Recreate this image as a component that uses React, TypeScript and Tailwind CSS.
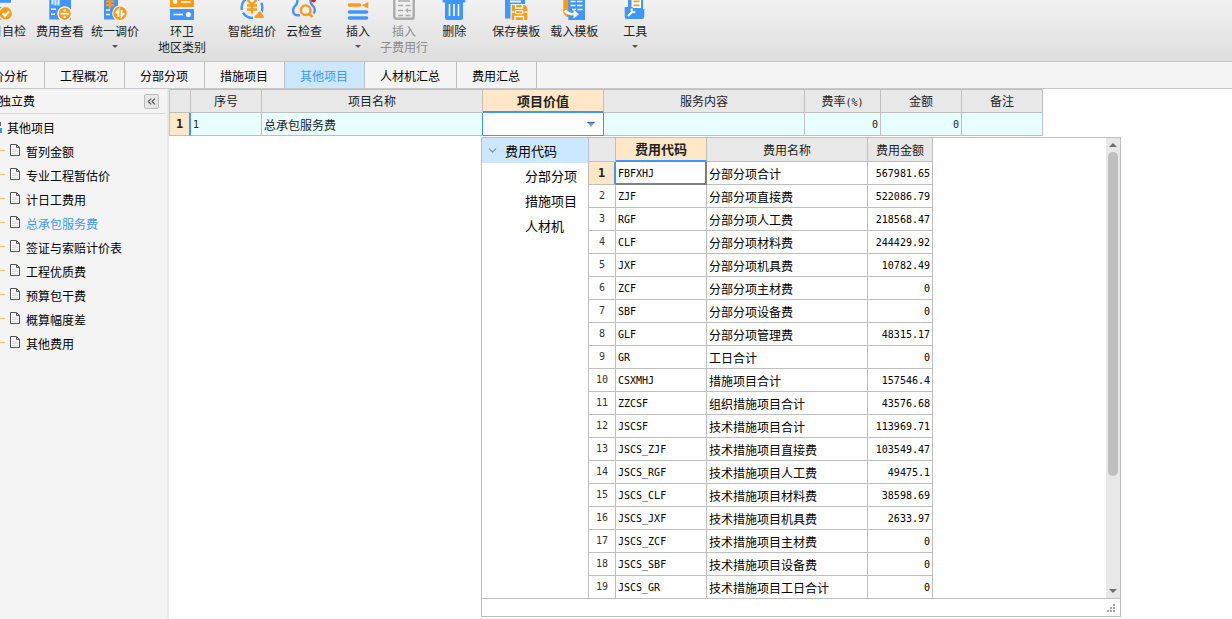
import { useState } from "react";
import type { ReactNode } from "react";
import { ChevronDown, ChevronsLeft } from "lucide-react";

interface Tool {
  label: string;
  sub?: string;
  menu?: boolean;
  disabled?: boolean;
  // left margin, the tool groups are not evenly spaced
  gap: string;
  icon: ReactNode;
}

const BLUE = "#4096ff";
const ORANGE = "#ff9a14";

const TOOLS: Tool[] = [
  {
    label: "项目自检",
    gap: "-ml-[22px]",
    icon: (
      <>
        <path d="M0 0h21v2.700H0zM0 7h12v12.500H0z" fill={BLUE} />
        <path d="M3 5h6M3 11h4" stroke="#fff" strokeWidth="2" />
        <circle cx="15.7" cy="13.3" r="7.4" fill="#f0f0f0" />
        <circle cx="15.7" cy="13.3" r="6.200" fill={ORANGE} />
        <path d="M12.500 13.200l2.500 2.600 4.200-4.600" fill="none" stroke="#fff" strokeWidth="2.200" />
      </>
    ),
  },
  {
    label: "费用查看",
    gap: "ml-2.5",
    icon: (
      <>
        <path d="M1.300 0H23v19.500H1.300z" fill={BLUE} />
        <path d="M4.500 0v4.500M7.500 0v5.500M10.500 0v5.500" stroke="#d9eaff" strokeWidth="2.200" />
        <path d="M3 9.300h5M3 14.300h4" stroke="#fff" strokeWidth="1.500" />
        <circle cx="16.700" cy="13.700" r="7.400" fill="#fff" />
        <circle cx="16.700" cy="13.700" r="6.200" fill={ORANGE} />
        <path d="M12.500 13.700h8.400" stroke="#fff" strokeWidth="1.800" />
        <circle cx="16.700" cy="10.400" r="1.200" fill="#fff" />
        <circle cx="16.700" cy="17" r="1.200" fill="#fff" />
      </>
    ),
  },
  {
    label: "统一调价",
    menu: true,
    gap: "ml-[7px]",
    icon: (
      <>
        <path d="M1 0h14v19.500H1z" fill={BLUE} />
        <path d="M3 1.600h8M3 5.200h8M7 0v8.500" stroke={ORANGE} strokeWidth="2.200" />
        <path d="M3 10h4M3 14.500h4" stroke="#fff" strokeWidth="1.500" />
        <circle cx="17" cy="13.200" r="7.800" fill="#f4f4f4" />
        <circle cx="17" cy="13.200" r="6.700" fill={ORANGE} />
        <path d="M12.800 13.200l2.600-3v6.500M18.600 9.700v6.500l2.700-3" fill="none" stroke="#fff" strokeWidth="1.900" />
      </>
    ),
  },
  {
    label: "环卫",
    sub: "地区类别",
    gap: "ml-[19px]",
    icon: (
      <>
        <path d="M0 0h24v7H0z" fill={ORANGE} />
        <path d="M11 2h9.500" stroke="#fff" strokeWidth="1.600" />
        <circle cx="5" cy="1.700" r="2.200" fill="#fff" />
        <path d="M0 9h24v11H0z" fill={BLUE} />
        <path d="M3.500 14.500h9.500" stroke="#fff" strokeWidth="1.600" />
        <circle cx="18.300" cy="14.500" r="2.600" fill="#fff" />
      </>
    ),
  },
  {
    label: "智能组价",
    gap: "ml-[22px]",
    icon: (
      <>
        <circle cx="12" cy="7.500" r="10.400" fill="none" stroke={BLUE} strokeWidth="2.400" strokeDasharray="12 3" />
        <path d="M7.500 0L12 4.500 16.500 0M7 5.500h10M7 9.500h10M12 4v9.500" fill="none" stroke={ORANGE} strokeWidth="2.400" />
        <path d="M13.500 19c0-3 1-4.500 3-5.500 0-4.500 6-4.500 6 0 1.500 1 2.500 2.500 2.500 5.500z" fill="#ededed" />
        <path d="M14.500 18c0-2.500 1-3 3-4 0-3.500 4.500-3.500 4.500 0 1 1 2 1.500 2 4z" fill={ORANGE} />
      </>
    ),
  },
  {
    label: "云检查",
    gap: "ml-2.5",
    icon: (
      <>
        <path
          d="M5.500 0C5.500 3 5 4.500 3 6 0 9 .5 15 5 15.300h3M18.500 0c0 3 .5 4.500 2.500 6 2 2 2.500 5.500.500 7.500"
          fill="none"
          stroke={BLUE}
          strokeWidth="2.400"
        />
        <circle cx="13.700" cy="10.200" r="4.800" fill="none" stroke={ORANGE} strokeWidth="2.400" />
        <path d="M17 13.700l3.500 3.300" stroke={ORANGE} strokeWidth="2.600" />
        <circle cx="21.500" cy="0" r="2.400" fill="#f5121d" />
      </>
    ),
  },
  {
    label: "插入",
    menu: true,
    gap: "ml-6",
    icon: (
      <>
        <path d="M3.500 5h10" stroke={ORANGE} strokeWidth="3.600" strokeLinecap="round" />
        <path d="M22.300 2v6.400l-6.600-3.200z" fill={ORANGE} />
        <path d="M3.500 12h17M3.500 18h17" stroke={BLUE} strokeWidth="3.600" strokeLinecap="round" />
      </>
    ),
  },
  {
    label: "插入",
    sub: "子费用行",
    disabled: true,
    gap: "ml-2.5",
    icon: (
      <>
        <rect x="2.300" y="-4" width="19.400" height="22.700" rx="2" fill="none" stroke="#ababab" strokeWidth="2.400" />
        <path d="M6 1h12M6 5.500h5M13.500 5.500h5M6 10.500h5M14 10.500h5M6 15.500h5M13.500 15.500h5" stroke="#ababab" strokeWidth="1.600" />
        <path d="M13 10.500l3-2.500v5z" fill="#ababab" />
      </>
    ),
  },
  {
    label: "删除",
    gap: "ml-3.5",
    icon: (
      <>
        <path d="M.7 0h22.600v2.500H.7zM3 2.500h18V18a2 2 0 01-2 2H5a2 2 0 01-2-2z" fill={BLUE} />
        <path d="M7.500 4v12M12 4v12M16.500 4v12" stroke="#fff" strokeWidth="1.600" />
      </>
    ),
  },
  {
    label: "保存模板",
    gap: "ml-[26px]",
    icon: (
      <>
        <path d="M1 0h20v18.500H1z" fill={BLUE} />
        <path d="M6 1.500h11" stroke="#fff" strokeWidth="2" />
        <path d="M6.500 4H24v16H6.500z" fill="#f2f2f2" />
        <path d="M7.700 5h13l2.600 2.500V20H7.700z" fill={ORANGE} />
        <path d="M11.500 5v3h7V5" fill="none" stroke="#fff" strokeWidth="1.400" />
        <path d="M7.700 12h3M20.300 12h3M11 20v-3.500h8.500V20" fill="none" stroke="#fff" strokeWidth="1.400" />
        <rect x="11.500" y="10.700" width="7.500" height="3" rx="1.500" fill="none" stroke="#fff" strokeWidth="1.300" />
      </>
    ),
  },
  {
    label: "载入模板",
    gap: "ml-2.5",
    icon: (
      <>
        <path d="M1.300 0H7v17H4.500l-3.200-4z" fill={ORANGE} />
        <path d="M6.300 0H23v20H6.300z" fill={BLUE} />
        <path d="M8.500 1.500h5M15 1.500h5.500M8.500 5.500h5M15 5.500h5.500M10 9.500h4M15.500 9.500h5" stroke="#fff" strokeWidth="1.500" />
        <path d="M3 10.500c2 3 5 3.700 9.500 3.700" fill="none" stroke="#fff" strokeWidth="2.800" />
        <path d="M11.500 9.500l5.500 4.700-5.500 4.300z" fill="#fff" />
      </>
    ),
  },
  {
    label: "工具",
    menu: true,
    gap: "ml-[25px]",
    icon: (
      <>
        <path d="M5 0h15v10H5z" fill={BLUE} />
        <path d="M8.500 0h9.500v8H8.500z" fill="#fff" />
        <path d="M10.500 1.300h6M10.500 5.300h6" stroke={ORANGE} strokeWidth="1.800" />
        <path d="M1.700 7h7.500l3 2h9.100v7.500a2.500 2.500 0 01-2.500 2.500H4.200a2.500 2.500 0 01-2.500-2.500z" fill={BLUE} />
        <path d="M5 16l4.500-4.500" stroke="#fff" strokeWidth="2.200" />
        <path d="M8.500 8.500l.5 3.300 3.300.500" fill="none" stroke="#fff" strokeWidth="2" />
      </>
    ),
  },
];

const TABS = ["造价分析", "工程概况", "分部分项", "措施项目", "其他项目", "人材机汇总", "费用汇总"];

const TREE = [
  "暂列金额",
  "专业工程暂估价",
  "计日工费用",
  "总承包服务费",
  "签证与索赔计价表",
  "工程优质费",
  "预算包干费",
  "概算幅度差",
  "其他费用",
];

const CODES: [string, string, string][] = [
  ["FBFXHJ", "分部分项合计", "567981.65"],
  ["ZJF", "分部分项直接费", "522086.79"],
  ["RGF", "分部分项人工费", "218568.47"],
  ["CLF", "分部分项材料费", "244429.92"],
  ["JXF", "分部分项机具费", "10782.49"],
  ["ZCF", "分部分项主材费", "0"],
  ["SBF", "分部分项设备费", "0"],
  ["GLF", "分部分项管理费", "48315.17"],
  ["GR", "工日合计", "0"],
  ["CSXMHJ", "措施项目合计", "157546.4"],
  ["ZZCSF", "组织措施项目合计", "43576.68"],
  ["JSCSF", "技术措施项目合计", "113969.71"],
  ["JSCS_ZJF", "技术措施项目直接费", "103549.47"],
  ["JSCS_RGF", "技术措施项目人工费", "49475.1"],
  ["JSCS_CLF", "技术措施项目材料费", "38598.69"],
  ["JSCS_JXF", "技术措施项目机具费", "2633.97"],
  ["JSCS_ZCF", "技术措施项目主材费", "0"],
  ["JSCS_SBF", "技术措施项目设备费", "0"],
  ["JSCS_GR", "技术措施项目工日合计", "0"],
];

const MONO = "font-['DejaVu_Sans_Mono','Noto_Sans_CJK_SC',monospace] text-[10px]";
const HEAD = "border-b border-r border-[#bfbfbf] bg-[#e8e8e8] p-0 text-center font-normal";
const HEAD_ON = "border-b-2 border-r border-b-[#4096ff] border-r-[#bfbfbf] bg-[#ffe7c8] p-0 text-center text-[13px] leading-4 font-bold";
const PAD = "pt-0.5 px-0.5 pb-0";
const CELL = `border-b border-r border-[#bfbfbf] ${PAD}`;
const ROW_HEAD = `border-b border-r border-[#bfbfbf] p-0 text-center font-normal text-[#333] ${MONO}`;
const ROW_ON =
  "border-b border-r-2 border-b-[#bfbfbf] border-r-[#4096ff] bg-[#ffe7c8] p-0 text-center font-['DejaVu_Sans_Mono',monospace] text-xs font-bold text-[#222]";

function Toolbar() {
  return (
    <header className="flex h-[62px] items-start overflow-hidden border-b border-[#c6c6c6] bg-linear-to-b from-[#f1f1f1] to-[#dedede]">
      {TOOLS.map((t, i) => (
        <button
          key={i}
          disabled={t.disabled}
          className={`flex shrink-0 flex-col items-center leading-4 ${t.gap} ${t.disabled ? "text-[#8c8c8c]" : "text-[#222]"}`}
        >
          <svg viewBox="0 0 24 20" className="mb-[3px] h-5 w-6" aria-hidden="true">
            {t.icon}
          </svg>
          <span className="whitespace-nowrap">{t.label}</span>
          {t.sub && <span className="whitespace-nowrap">{t.sub}</span>}
          {t.menu && (
            <svg viewBox="0 0 6 3" className="mt-1.5 h-[3px] w-1.5" aria-hidden="true">
              <path d="M0 0h6L3 3z" fill="#555" />
            </svg>
          )}
        </button>
      ))}
    </header>
  );
}

function Tabs({ active, onSelect }: { active: string; onSelect: (tab: string) => void }) {
  return (
    <nav className="flex h-[27px] overflow-hidden border-b border-[#c8c8c8] bg-[#f4f4f4]">
      {TABS.map((tab) => (
        <button
          key={tab}
          onClick={() => onSelect(tab)}
          className={`shrink-0 border-r border-[#bfbfbf] pl-[15px] pr-4 pt-0.5 first:-ml-[35px] ${
            tab === active ? "bg-[#cce8ff] text-[#4096ff]" : "text-black"
          }`}
        >
          {tab}
        </button>
      ))}
    </nav>
  );
}

function Sidebar() {
  const [current, setCurrent] = useState("总承包服务费");

  return (
    <aside className="w-[169px] shrink-0 overflow-hidden border-r-2 border-[#e8e8e8] bg-[#f4f4f4]">
      <div className="mr-0.5 flex h-[25px] items-center justify-between border-b border-[#d6d6d6] pr-1.5">
        <span className="-ml-px">独立费</span>
        <button
          aria-label="收起"
          className="flex size-[15px] items-center justify-center rounded-xs border border-[#bcbcbc] bg-[#e6e6e6] text-[#555]"
        >
          <ChevronsLeft size={13} strokeWidth={2} />
        </button>
      </div>
      <ul className="pt-0.5">
        <li className="flex h-6 items-center">
          <svg viewBox="0 0 7 14" className="h-3.5 w-[7px]" aria-hidden="true">
            <path d="M0 1h1v4H0z" fill="#666" />
            <path d="M0 7h2v5H0z" fill={BLUE} />
          </svg>
          其他项目
        </li>
        {TREE.map((name) => (
          <li key={name}>
            <button
              onClick={() => setCurrent(name)}
              className={`flex h-6 items-center whitespace-nowrap ${name === current ? "text-[#4096ff]" : "text-black"}`}
            >
              <svg viewBox="0 0 26 14" className="mb-1 h-3.5 w-[26px]" aria-hidden="true">
                <path d="M0 7.500h5" stroke="#ffc266" />
                <path d="M10.500 1.500h6l3 3v8h-9z" fill="#fff" stroke="#555" />
                <path d="M16.500 1.500v3h3" fill="none" stroke="#555" />
                <path d="M12 6.500h6M12 8.500h6M12 10.500h6" stroke="#ddd" />
              </svg>
              {name}
            </button>
          </li>
        ))}
      </ul>
    </aside>
  );
}

function FeeTable() {
  return (
    <table className="w-[874px] table-fixed border-separate border-spacing-0 border-l border-t border-[#bfbfbf] text-[#222]">
      <colgroup>
        <col className="w-[21px]" />
        <col className="w-[71px]" />
        <col className="w-[221px]" />
        <col className="w-[121px]" />
        <col className="w-[201px]" />
        <col className="w-[76px]" />
        <col className="w-[81px]" />
        <col className="w-[81px]" />
      </colgroup>
      <thead>
        <tr className="h-[23px]">
          <th className={HEAD} />
          <th className={HEAD}>序号</th>
          <th className={HEAD}>项目名称</th>
          <th className={HEAD_ON}>项目价值</th>
          <th className={HEAD}>服务内容</th>
          <th className={HEAD}>
            费率<span className={MONO}>(%)</span>
          </th>
          <th className={HEAD}>金额</th>
          <th className={HEAD}>备注</th>
        </tr>
      </thead>
      <tbody>
        <tr className="h-[23px] bg-[#e8ffff]">
          <th className={ROW_ON}>1</th>
          <td className={`${CELL} ${MONO}`}>1</td>
          <td className={`border-b border-r border-b-[#bfbfbf] border-r-[#4096ff] ${PAD}`}>总承包服务费</td>
          <td className="relative border-b border-r border-[#4096ff] bg-white p-0">
            <select aria-label="项目价值" className="block h-[22px] w-full appearance-none bg-white outline-none" />
            <svg viewBox="0 0 8 5" className="pointer-events-none absolute right-2 top-[9px] h-[5px] w-2" aria-hidden="true">
              <path d="M0 0h8L4 5z" fill="#6aa9d8" />
              <path d="M0 0h8L7 1H1z" fill="#2b6490" />
            </svg>
          </td>
          <td className={CELL} />
          <td className={`${CELL} ${MONO} text-right`}>0</td>
          <td className={`${CELL} ${MONO} text-right`}>0</td>
          <td className={CELL} />
        </tr>
      </tbody>
    </table>
  );
}

function CodePicker() {
  return (
    <div className="absolute left-[312px] top-12 w-[640px] border border-[#bfbfbf] bg-white">
      <div className="flex border-b border-[#bfbfbf]">
        <ul className="w-[106px] text-[13px] leading-[25px] text-black">
          <li className="flex items-center gap-1.5 bg-[#cce8ff] pl-1">
            <ChevronDown size={13} strokeWidth={2} className="text-[#888]" />
            费用代码
          </li>
          <li className="pl-[43px]">分部分项</li>
          <li className="pl-[43px]">措施项目</li>
          <li className="pl-[43px]">人材机</li>
        </ul>
        <table className="-mb-px w-[345px] table-fixed border-separate border-spacing-0 border-l border-[#bfbfbf] text-black">
          <colgroup>
            <col className="w-[27px]" />
            <col className="w-[91px]" />
            <col className="w-[161px]" />
            <col className="w-[65px]" />
          </colgroup>
          <thead>
            <tr className="h-6 text-[#222]">
              <th className={HEAD} />
              <th className={HEAD_ON}>费用代码</th>
              <th className={HEAD}>费用名称</th>
              <th className={HEAD}>费用金额</th>
            </tr>
          </thead>
          <tbody>
            {CODES.map(([code, name, amount], i) => (
              <tr key={code} className="h-[23px]">
                <th className={i === 0 ? ROW_ON : ROW_HEAD}>{i + 1}</th>
                <td className={`${MONO} ${i === 0 ? `border-b-2 border-r-2 border-[#808080] ${PAD}` : CELL}`}>{code}</td>
                <td className={CELL}>{name}</td>
                <td className={`${CELL} ${MONO} text-right`}>{amount}</td>
              </tr>
            ))}
          </tbody>
        </table>
        {/* scroll bar */}
        <div className="ml-auto flex w-3.5 flex-col items-center bg-[#e8e8e8] py-[5px]">
          <svg viewBox="0 0 8 4" className="h-1 w-2" aria-hidden="true">
            <path d="M4 0l4 4H0z" fill="#6b6b75" />
          </svg>
          <div className="mt-[5px] h-[324px] w-2.5 rounded-full bg-[#bfbfbf]" />
          <svg viewBox="0 0 8 4" className="mt-auto h-1 w-2" aria-hidden="true">
            <path d="M0 0h8L4 4z" fill="#6b6b75" />
          </svg>
        </div>
      </div>
      <div className="flex h-[17px] items-center justify-end pr-[5px]">
        <svg viewBox="0 0 8 8" className="size-2" aria-hidden="true">
          <path d="M6 0h2v2H6zM3 3h2v2H3zM6 3h2v2H6zM0 6h2v2H0zM3 6h2v2H3zM6 6h2v2H6z" fill="#a8a8a8" />
        </svg>
      </div>
    </div>
  );
}

export default function App() {
  const [tab, setTab] = useState("其他项目");

  return (
    <div className="flex h-screen flex-col overflow-hidden bg-white font-['Noto_Sans_CJK_SC',sans-serif] text-xs">
      <Toolbar />
      <Tabs active={tab} onSelect={setTab} />
      <div className="flex min-h-0 flex-1">
        <Sidebar />
        <main className="relative min-w-0 flex-1">
          <FeeTable />
          <CodePicker />
        </main>
      </div>
    </div>
  );
}
